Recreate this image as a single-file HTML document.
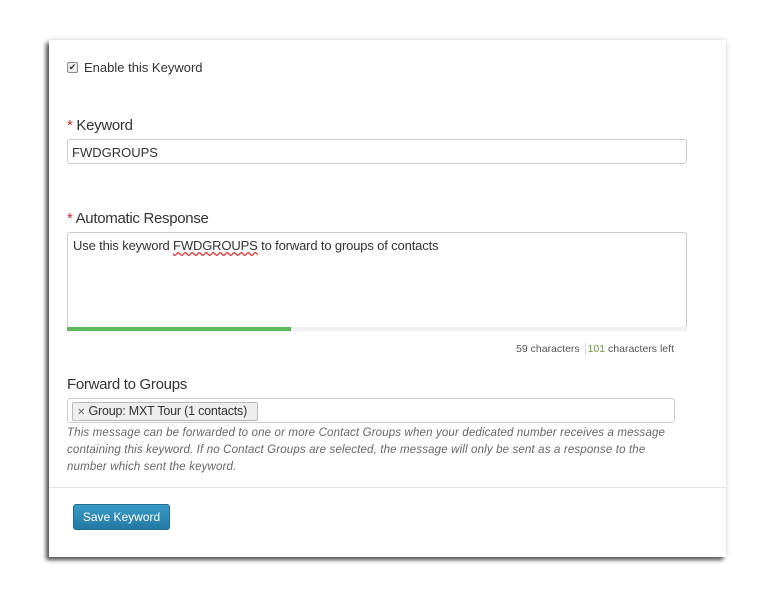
<!DOCTYPE html>
<html><head><style>
body{margin:0;width:778px;height:597px;background:#fff;font-family:"Liberation Sans",sans-serif;color:#333;position:relative;overflow:hidden}
.panel{position:absolute;left:49px;top:40px;width:677px;height:517px;background:#fff;box-shadow:-3px 3px 4px #555,0 0 6px rgba(0,0,0,.15)}
.a{position:absolute;white-space:nowrap}
.lbl{font-size:15px;color:#333;letter-spacing:-0.3px}
.req{color:#c9302c}
.box{position:absolute;border:1px solid #ccc;border-radius:3px;background:#fff;box-sizing:border-box}
</style></head><body>
<div class="panel"></div>
<div class="a" style="left:67px;top:62px;width:9px;height:9px;border:1px solid #888;border-radius:2px;background:#eee;font-size:9px;line-height:9px;text-align:center">✔</div>
<div class="a" style="left:84px;top:60px;font-size:13px">Enable this Keyword</div>
<div class="a lbl" style="left:67px;top:117px"><span class="req">*</span> Keyword</div>
<div class="box" style="left:67px;top:139px;width:620px;height:25px;padding:5px 4px;font-size:13px">FWDGROUPS</div>
<div class="a lbl" style="left:67px;top:210px"><span class="req">*</span> Automatic Response</div>
<div class="box" style="left:67px;top:232px;width:620px;height:96px;padding:5px 5px;font-size:13px;letter-spacing:-0.15px">Use this keyword <span style="text-decoration:underline wavy #d33">FWDGROUPS</span> to forward to groups of contacts</div>
<div class="a" style="left:67px;top:327px;width:620px;height:4px;background:#f0f0f0"></div>
<div class="a" style="left:67px;top:327px;width:224px;height:4px;background:#5cb85c"></div>
<div class="a" style="right:104px;top:343px;font-size:10.5px;color:#555;letter-spacing:0">59 characters <span style="border-left:1px solid #ddd;margin:0 2px"></span> <span style="color:#6a9a3a">101</span> characters left</div>
<div class="a lbl" style="left:67px;top:376px">Forward to Groups</div>
<div class="box" style="left:67px;top:398px;width:608px;height:25px"></div>
<div class="a" style="left:72px;top:402px;width:186px;height:19px;border:1px solid #bbb;border-radius:2px;background:#eee;font-size:12.5px;line-height:17px;box-sizing:border-box;padding-left:4px;letter-spacing:-0.2px"><span style="font-size:10px;color:#666">✕</span> Group: MXT Tour (1 contacts)</div>
<div class="a" style="left:67px;top:425px;font-size:11.5px;font-style:italic;color:#666;line-height:17px;letter-spacing:0.15px">This message can be forwarded to one or more Contact Groups when your dedicated number receives a message<br>containing this keyword. If no Contact Groups are selected, the message will only be sent as a response to the<br>number which sent the keyword.</div>
<div class="a" style="left:49px;top:487px;width:677px;height:1px;background:#e5e5e5"></div>
<div class="a" style="left:73px;top:504px;width:97px;height:26px;border-radius:3px;background:linear-gradient(#3a9bc6,#2379a3);border:1px solid #1f6d93;box-sizing:border-box;color:#fff;font-size:12px;line-height:24px;text-align:center">Save Keyword</div>
</body></html>
